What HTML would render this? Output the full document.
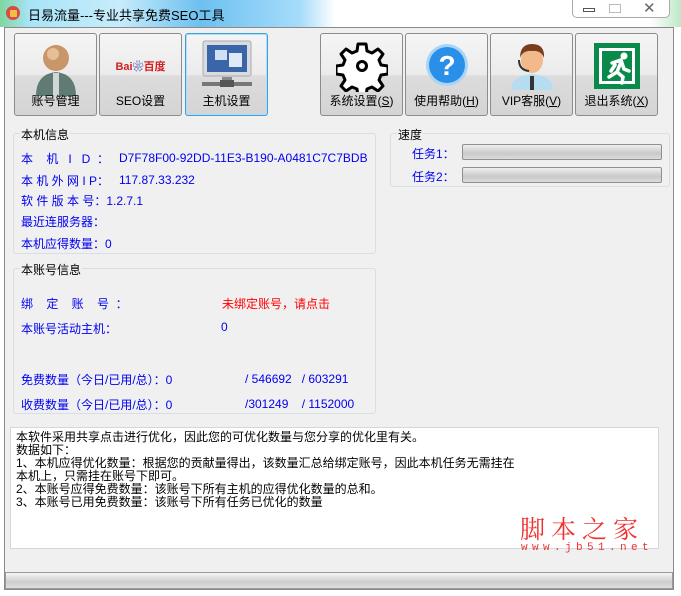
<!DOCTYPE html>
<html><head><meta charset="utf-8"><style>
*{margin:0;padding:0;box-sizing:border-box}
body{width:681px;height:596px;overflow:hidden;position:relative;font-family:"Liberation Sans","Noto Sans CJK SC",sans-serif;font-size:12px;background:#fff}
.title{position:absolute;left:0;top:0;width:681px;height:27px;background:linear-gradient(90deg,#7fd6a0 0px,#a8e4f8 30px,#c7ecfb 120px,#6cc0f0 200px,#a6dcfa 300px,#fff 335px,#fff 650px,#bfe8c8 681px)}
.title span{position:absolute;left:28px;top:5px;font-size:13px;color:#000}
.ico{position:absolute;left:6px;top:6px;width:14px;height:14px;border-radius:50%;background:#d94a4a}
.ico:after{content:"";position:absolute;left:4px;top:4px;width:7px;height:7px;background:#f0c040;border-radius:1px}
.ctrl{position:absolute;left:572px;top:0;width:98px;height:18px;border:1px solid #aaa;border-top:none;border-radius:0 0 5px 5px;background:#fff}
.client{position:absolute;left:4px;top:27px;width:670px;height:563px;background:#f0f0f0;border:1px solid #8a8a8a}
.btn{position:absolute;top:33px;width:83px;height:83px;border:1px solid #8c8c8c;border-radius:3px;background:linear-gradient(#f5f5f5 0,#ebebeb 50%,#dcdcdc 52%,#d4d4d4 100%);text-align:center}
.btn.sel{border:1px solid #3c9fdb;box-shadow:inset 0 0 0 1px #aee0f8}
.btn .lb{position:absolute;left:0;right:0;bottom:6px;font-size:12px;color:#000}
.btn .ic{position:absolute;left:50%;top:6px;transform:translateX(-50%)}
.gb{position:absolute;border:1px solid #d5dfe5;border-radius:3px}
.gb .t{position:absolute;left:6px;top:-8px;background:#f0f0f0;padding:0 1px;color:#000;font-size:12px}
.bl{position:absolute;color:#0000f0;font-size:12px;white-space:pre}
.prog{position:absolute;left:462px;width:200px;height:16px;border:1px solid #8f8f8f;border-radius:2px;background:linear-gradient(#efefef,#d6d6d6 40%,#c9c9c9 60%,#dcdcdc)}
.txt{position:absolute;left:10px;top:427px;width:649px;height:122px;background:#fff;border:1px solid #d0d8e0;padding:3px 5px;font-size:12px;line-height:13px;color:#000}
.status{position:absolute;left:5px;top:572px;width:668px;height:17px;border:1px solid #9a9a9a;background:linear-gradient(#f4f4f4,#d8d8d8 45%,#cdcdcd 60%,#e0e0e0)}
</style></head><body>
<div class="title"><div class="ico"></div><span>日易流量---专业共享免费SEO工具</span></div>
<div class="ctrl"><div style="position:absolute;left:10px;top:8px;width:12px;height:4px;border:1px solid #555"></div><div style="position:absolute;left:36px;top:4px;width:12px;height:9px;border:1px solid #bbb"></div><div style="position:absolute;left:70px;top:-1px;font-size:15px;color:#666">✕</div></div>
<div class="client"></div>

<div class="btn" style="left:14px"><svg class="ic" width="46" height="58" viewBox="0 0 46 58"><path d="M3 56 Q3 34 23 32 Q43 34 43 56Z" fill="#5f7b74"/><rect x="20" y="33" width="6" height="23" fill="#cfd8d6"/><circle cx="23" cy="18" r="13" fill="#c9966a"/><circle cx="20" cy="14" r="6" fill="#e7bf97"/></svg><div class="lb">账号管理</div></div>
<div class="btn" style="left:99px"><div class="ic" style="top:24px;white-space:nowrap;font-weight:bold;font-size:11px"><span style="color:#d42020">Bai</span><span style="color:#2a2f9c">❀</span><span style="color:#d42020">百度</span></div><div class="lb">SEO设置</div></div>
<div class="btn sel" style="left:185px"><svg class="ic" width="54" height="50" viewBox="0 0 54 50"><rect x="3" y="1" width="48" height="35" rx="2" fill="#d8dce0" stroke="#aaa"/><rect x="7" y="5" width="40" height="27" fill="#3a65a8"/><rect x="15" y="10" width="12" height="10" fill="#cfe0f5"/><rect x="29" y="13" width="13" height="14" fill="#dfe9f7"/><rect x="22" y="37" width="10" height="6" fill="#888"/><rect x="2" y="42" width="50" height="4" fill="#777"/><rect x="20" y="40" width="14" height="7" fill="#555"/></svg><div class="lb">主机设置</div></div>
<div class="btn" style="left:320px"><svg class="ic" width="52" height="52" viewBox="0 0 52 52"><path d="M22 4h8l1 7 5 2 6-4 5 5-4 6 2 5 7 1v8l-7 1-2 5 4 6-5 5-6-4-5 2-1 7h-8l-1-7-5-2-6 4-5-5 4-6-2-5-7-1v-8l7-1 2-5-4-6 5-5 6 4 5-2z" fill="#fff" stroke="#000" stroke-width="3" stroke-linejoin="round"/><circle cx="26" cy="26" r="4.5" fill="none" stroke="#000" stroke-width="3"/></svg><div class="lb">系统设置(<u>S</u>)</div></div>
<div class="btn" style="left:405px"><svg class="ic" style="top:9px" width="44" height="44" viewBox="0 0 44 44"><circle cx="22" cy="22" r="21" fill="#a9d4f5"/><circle cx="22" cy="22" r="18" fill="#2a8fe8"/><text x="22" y="32" text-anchor="middle" font-size="28" font-weight="bold" fill="#fff" font-family="Liberation Sans">?</text></svg><div class="lb">使用帮助(<u>H</u>)</div></div>
<div class="btn" style="left:490px"><svg class="ic" width="46" height="50" viewBox="0 0 46 50"><path d="M2 50 Q2 36 23 34 Q44 36 44 50Z" fill="#b6dcf2"/><rect x="21" y="36" width="4" height="14" fill="#333"/><ellipse cx="23" cy="20" rx="11" ry="13" fill="#f2b98a"/><path d="M11 18 Q11 4 23 4 Q36 4 35 18 Q32 10 23 11 Q14 10 11 18Z" fill="#7a3d1e"/><path d="M10 20 Q10 30 20 31" fill="none" stroke="#333" stroke-width="2"/></svg><div class="lb">VIP客服(<u>V</u>)</div></div>
<div class="btn" style="left:575px"><svg class="ic" style="top:9px" width="46" height="46" viewBox="0 0 46 46"><rect width="46" height="46" fill="#0a8a4a"/><rect x="5" y="5" width="36" height="36" fill="#fff"/><rect x="8" y="8" width="30" height="30" fill="#0a8a4a"/><circle cx="30" cy="13" r="3.5" fill="#fff"/><path d="M18 20 L27 17 L30 26 L35 28 M27 19 L23 29 L29 34 L28 40 M23 29 L15 34 M21 22 L17 28" stroke="#fff" stroke-width="3.5" fill="none" stroke-linecap="round"/></svg><div class="lb">退出系统(<u>X</u>)</div></div>

<div class="gb" style="left:13px;top:133px;width:363px;height:121px"><div class="t">本机信息</div></div>
<div class="bl" style="left:21px;top:150px">本    机   I   D  ：</div><div class="bl" style="left:119px;top:151px">D7F78F00-92DD-11E3-B190-A0481C7C7BDB</div>
<div class="bl" style="left:21px;top:172px">本 机 外 网 I P：</div><div class="bl" style="left:119px;top:173px">117.87.33.232</div>
<div class="bl" style="left:21px;top:192px">软 件 版 本 号：1.2.7.1</div>
<div class="bl" style="left:21px;top:213px">最近连服务器：</div>
<div class="bl" style="left:21px;top:235px">本机应得数量：0</div>

<div class="gb" style="left:13px;top:268px;width:363px;height:146px"><div class="t">本账号信息</div></div>
<div class="bl" style="left:21px;top:295px">绑    定    账    号  ：</div>
<div class="bl" style="left:222px;top:295px;color:#f00;width:121px;overflow:hidden">未绑定账号，请点击</div>
<div class="bl" style="left:21px;top:320px">本账号活动主机：</div><div class="bl" style="left:221px;top:320px">0</div>
<div class="bl" style="left:21px;top:371px">免费数量（今日/已用/总）：0</div><div class="bl" style="left:245px;top:372px">/ 546692   / 603291</div>
<div class="bl" style="left:21px;top:396px">收费数量（今日/已用/总）：0</div><div class="bl" style="left:245px;top:397px">/301249    / 1152000</div>

<div class="gb" style="left:390px;top:133px;width:280px;height:54px"><div class="t">速度</div></div>
<div class="bl" style="left:412px;top:145px">任务1：</div><div class="prog" style="top:144px"></div>
<div class="bl" style="left:412px;top:168px">任务2：</div><div class="prog" style="top:167px"></div>

<div class="txt">本软件采用共享点击进行优化，因此您的可优化数量与您分享的优化里有关。<br>数据如下：<br>1、本机应得优化数量：根据您的贡献量得出，该数量汇总给绑定账号，因此本机任务无需挂在<br>本机上，只需挂在账号下即可。<br>2、本账号应得免费数量：该账号下所有主机的应得优化数量的总和。<br>3、本账号已用免费数量：该账号下所有任务已优化的数量</div>
<div style="position:absolute;left:520px;top:510px;color:#f03030;font-size:25px;font-family:'Noto Serif CJK SC',serif;letter-spacing:6px">脚本之家</div>
<div style="position:absolute;left:521px;top:542px;color:#f03030;font-size:11px;letter-spacing:4.4px;font-family:'Liberation Mono',monospace">www.jb51.net</div>
<div class="status"></div>
</body></html>
